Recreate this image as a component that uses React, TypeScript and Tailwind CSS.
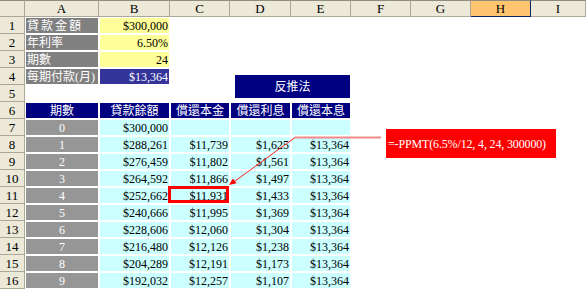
const COLS = ['A', 'B', 'C', 'D', 'E', 'F', 'G', 'H', 'I']

type CellSpec = {
  text?: string
  fill?: string
  align?: 'left' | 'right' | 'center'
  light?: boolean
  extra?: string
}

const data: [string, string, string, string, string][] = [
  ['1', '$288,261', '$11,739', '$1,625', '$13,364'],
  ['2', '$276,459', '$11,802', '$1,561', '$13,364'],
  ['3', '$264,592', '$11,866', '$1,497', '$13,364'],
  ['4', '$252,662', '$11,931', '$1,433', '$13,364'],
  ['5', '$240,666', '$11,995', '$1,369', '$13,364'],
  ['6', '$228,606', '$12,060', '$1,304', '$13,364'],
  ['7', '$216,480', '$12,126', '$1,238', '$13,364'],
  ['8', '$204,289', '$12,191', '$1,173', '$13,364'],
  ['9', '$192,032', '$12,257', '$1,107', '$13,364'],
]

function buildRows(): CellSpec[][] {
  const gray = 'bg-[#808080]'
  const yellow = 'bg-[#ffff99]'
  const navy = 'bg-[#000080]'
  const cyan = 'bg-[#ccffff]'
  const rows: CellSpec[][] = [
    [
      { text: '貸款金額', fill: gray, align: 'left', light: true, extra: 'tracking-[2px]' },
      { text: '$300,000', fill: yellow, align: 'right' },
    ],
    [
      { text: '年利率', fill: gray, align: 'left', light: true },
      { text: '6.50%', fill: yellow, align: 'right' },
    ],
    [
      { text: '期數', fill: gray, align: 'left', light: true },
      { text: '24', fill: yellow, align: 'right' },
    ],
    [
      { text: '每期付款(月)', fill: gray, align: 'left', light: true },
      { text: '$13,364', fill: 'bg-[#333399]', align: 'right', light: true },
    ],
    [],
    ['期數', '貸款餘額', '償還本金', '償還利息', '償還本息'].map((t) => ({
      text: t,
      fill: navy,
      align: 'center' as const,
      light: true,
    })),
    [
      { text: '0', fill: 'bg-[#969696]', align: 'center', light: true },
      { text: '$300,000', fill: cyan, align: 'right' },
      { fill: cyan },
      { fill: cyan },
      { fill: cyan },
    ],
    ...data.map((r) => [
      { text: r[0], fill: 'bg-[#969696]', align: 'center' as const, light: true },
      ...r.slice(1).map((t) => ({ text: t, fill: cyan, align: 'right' as const })),
    ]),
  ]
  return rows
}

function Cell({ spec }: { spec?: CellSpec }) {
  if (!spec || !spec.fill) {
    return <div className="h-[17px]" />
  }
  const align =
    spec.align === 'left' ? 'justify-start pl-[1px]' : spec.align === 'center' ? 'justify-center' : 'justify-end pr-[1px]'
  return (
    <div
      className={`h-[17px] border border-white flex items-center whitespace-nowrap overflow-hidden ${spec.fill} ${align} ${
        spec.light ? 'text-white' : 'text-black'
      } ${spec.extra ?? ''}`}
    >
      {spec.text}
    </div>
  )
}

export default function App() {
  const rows = buildRows()

  return (
    <div className="relative w-[586px] h-[290px] overflow-hidden bg-white font-['Liberation_Serif','Noto_Sans_CJK_TC',serif] text-[12px] leading-none text-black">
      <div className="grid grid-cols-[25px_74px_71px_60px_61px_60px_60px_60px_60px_55px]">
        {/* column headers */}
        <div className="h-[17px] bg-[#ece9d8] border-t border-t-[#8f8d80] border-r border-b border-[#aca899]" />
        {COLS.map((c) => (
          <div
            key={c}
            className={`h-[17px] flex items-center justify-center border-t border-t-[#8f8d80] border-r border-b text-[13px] ${
              c === 'H' ? 'bg-[#ffc46e] border-r-[#0a246a] border-b-[#0a246a]' : 'bg-[#ece9d8] border-[#aca899]'
            }`}
          >
            {c}
          </div>
        ))}

        {rows.map((row, i) => (
          <Row key={i} n={i + 1} row={row} />
        ))}
      </div>

      {/* floating label */}
      <div className="absolute left-[235px] top-[75px] w-[115px] h-[23px] bg-[#000080] text-white flex items-center justify-center text-[12px]">
        反推法
      </div>

      {/* formula callout */}
      <div className="absolute left-[386px] top-[129px] w-[170px] h-[29px] bg-[#ff0000] text-white flex items-center pl-[2px] text-[12px] tracking-[-0.15px] whitespace-nowrap">
        =-PPMT(6.5%/12, 4, 24, 300000)
      </div>

      <svg className="absolute inset-0 pointer-events-none" width="586" height="290">
        <line x1="295" y1="137.5" x2="381" y2="137.5" stroke="#f28a8a" strokeWidth="2" />
        <line x1="295" y1="137.5" x2="233" y2="182.5" stroke="#ff2020" strokeWidth="1" />
        <polygon points="229,185 236.5,183.3 232.9,178.5" fill="#ff0000" />
        <rect x="169.5" y="187.5" width="58" height="14" fill="none" stroke="#ff0000" strokeWidth="3" />
      </svg>
    </div>
  )
}

function Row({ n, row }: { n: number; row: CellSpec[] }) {
  return (
    <>
      <div className="h-[17px] bg-[#ece9d8] border-r border-b border-[#aca899] flex items-center justify-center text-[13px]">
        {n}
      </div>
      {COLS.map((c, j) => (
        <Cell key={c} spec={row[j]} />
      ))}
    </>
  )
}
